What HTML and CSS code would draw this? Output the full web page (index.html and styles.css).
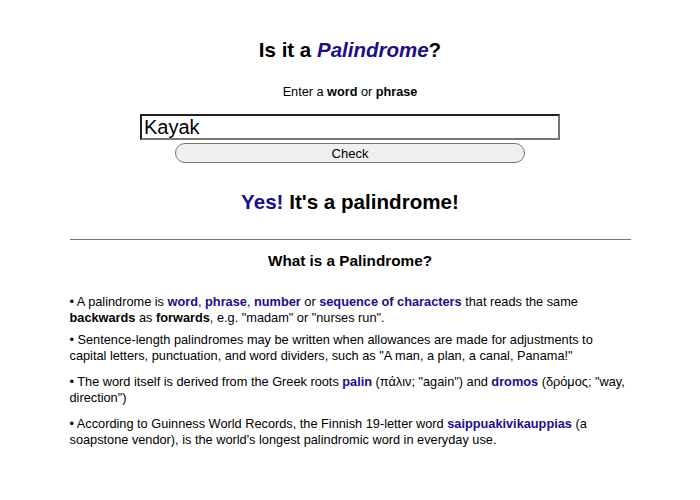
FILE: index.html
```html
<!DOCTYPE html>
<html lang="en">
<head>
<meta charset="utf-8">
<title>Is it a Palindrome?</title>
<link rel="stylesheet" href="styles.css">
</head>
<body>
<main class="page">
  <h1 class="title">Is it a <em class="accent">Palindrome</em>?</h1>
  <p class="prompt">Enter a <b>word</b> or <b>phrase</b></p>
  <form class="checker">
    <input class="word-input" type="text" value="Kayak">
    <button class="check-btn" type="button">Check</button>
  </form>
  <h2 class="result"><span class="accent">Yes!</span> It's a palindrome!</h2>
  <hr class="divider">
  <h3 class="about-title">What is a Palindrome?</h3>
  <section class="facts">
    <p class="fact fact-first">• A palindrome is <b class="accent">word</b>, <b class="accent">phrase</b>, <b class="accent">number</b> or <b class="accent">sequence of characters</b> that reads the same <b>backwards</b> as <b>forwards</b>, e.g. "madam" or "nurses run".</p>
    <p class="fact">• Sentence-length palindromes may be written when allowances are made for adjustments to capital letters, punctuation, and word dividers, such as "A man, a plan, a canal, Panama!"</p>
    <p class="fact">• The word itself is derived from the Greek roots <b class="accent">palin</b> (πάλιν; "again") and <b class="accent">dromos</b> (δρόμος; "way, direction")</p>
    <p class="fact">• According to Guinness World Records, the Finnish 19-letter word <b class="accent">saippuakivikauppias</b> (a soapstone vendor), is the world's longest palindromic word in everyday use.</p>
  </section>
</main>
</body>
</html>
```
FILE: styles.css
```css
html, body {
  margin: 0;
  padding: 0;
  background: #ffffff;
}
body {
  font-family: "Liberation Sans", Arial, sans-serif;
  color: #000;
}
.page {
  display: flex;
  flex-direction: column;
  align-items: center;
  padding-top: 38px;
}
.accent {
  color: #1b0d8e;
}
.title {
  margin: 0;
  font-size: 20.5px;
  font-weight: bold;
  line-height: 24px;
}
.title em {
  font-style: italic;
}
.prompt {
  margin: 22px 0 0;
  font-size: 12.7px;
  line-height: 16px;
}
.checker {
  margin-top: 14px;
  display: flex;
  flex-direction: column;
  align-items: center;
  gap: 3px;
}
.word-input {
  box-sizing: border-box;
  width: 420px;
  height: 26px;
  margin: 0;
  padding: 0 2px;
  border: 2px inset #767676;
  font-family: "Liberation Sans", Arial, sans-serif;
  font-size: 20px;
  color: #000;
  outline: none;
}
.check-btn {
  box-sizing: border-box;
  width: 350px;
  height: 20px;
  margin: 0;
  padding: 0;
  border: 1px solid #767676;
  border-radius: 10px;
  background: #efefef;
  font-family: "Liberation Sans", Arial, sans-serif;
  font-size: 13px;
  color: #000;
}
.result {
  margin: 27px 0 0;
  font-size: 20.6px;
  font-weight: bold;
  line-height: 24px;
}
.divider {
  width: 561px;
  margin: 25px 0 0;
  border: none;
  border-top: 1px solid #767676;
  height: 0;
}
.about-title {
  margin: 12px 0 0;
  font-size: 15.3px;
  font-weight: bold;
  line-height: 18px;
}
.facts {
  width: 561px;
  margin-top: 24px;
  display: flex;
  flex-direction: column;
  gap: 10px;
}
.fact {
  margin: 0;
  font-size: 12.75px;
  line-height: 16px;
}
.fact-first {
  margin-bottom: -4px;
}
```
